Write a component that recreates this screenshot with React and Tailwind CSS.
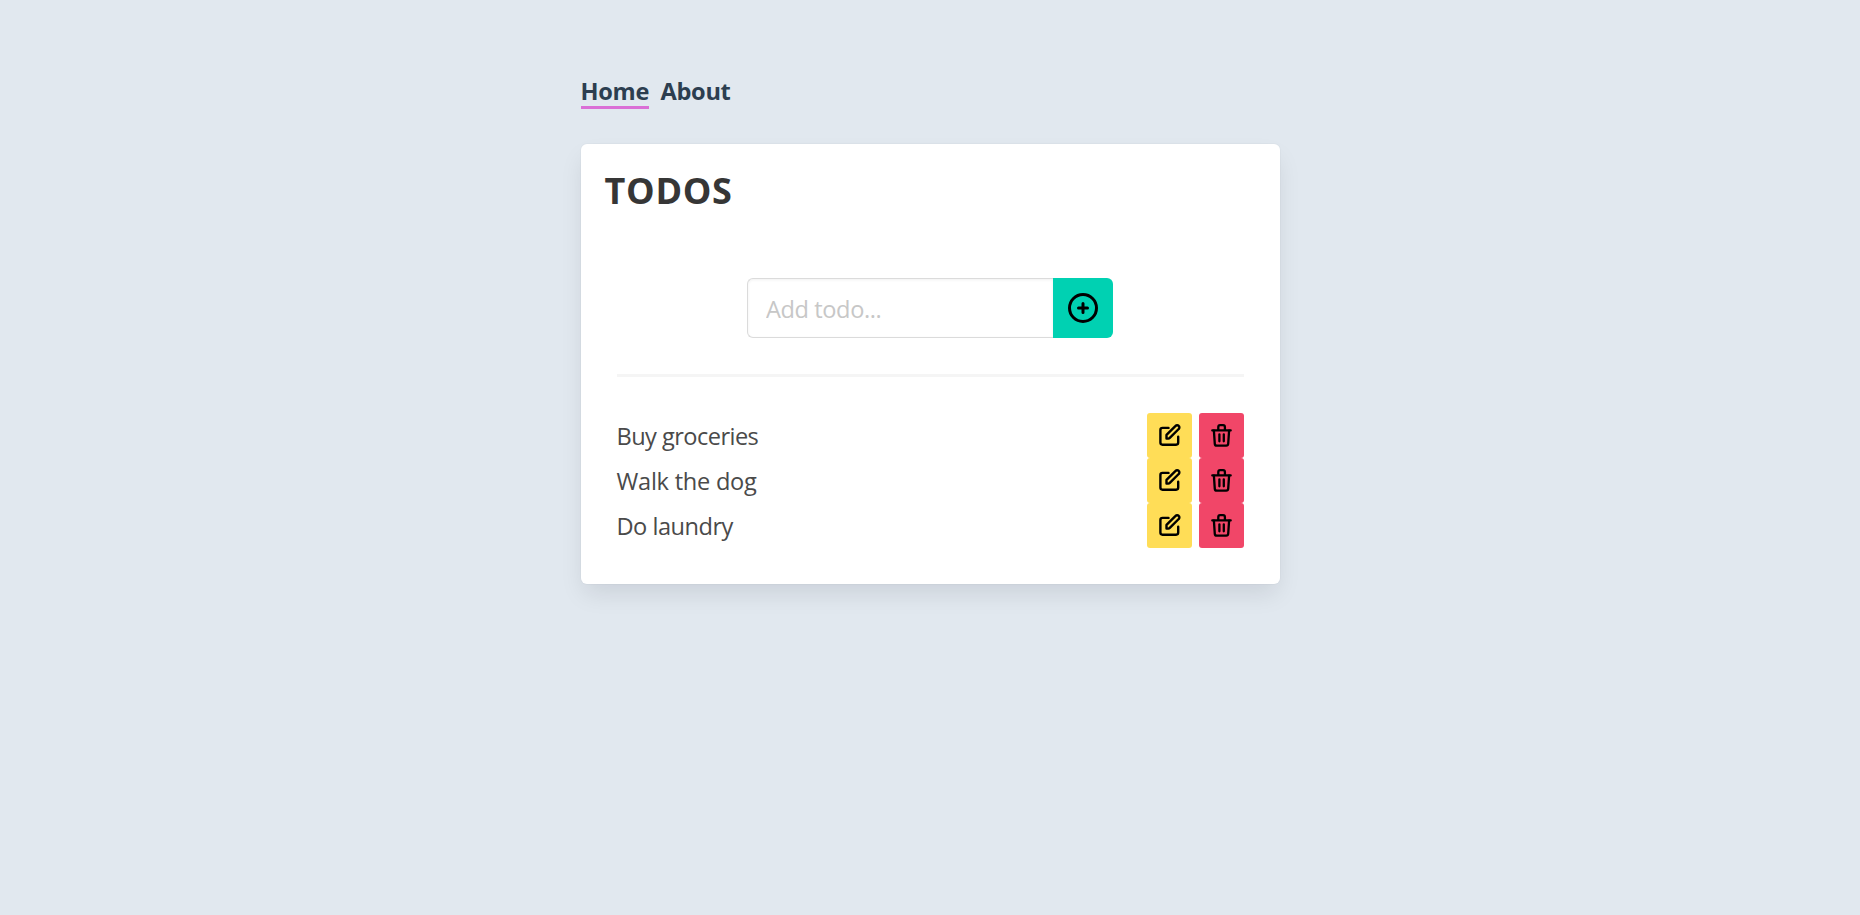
import React from 'react';

const todos = [
  { title: 'Buy groceries', tracking: 'tracking-[-0.55px]' },
  { title: 'Walk the dog', tracking: 'tracking-[-0.25px]' },
  { title: 'Do laundry', tracking: 'tracking-[-0.5px]' },
];

function PlusCircleIcon() {
  return (
    <svg className="h-8 w-8" viewBox="0 0 32 32" fill="none" stroke="black" strokeWidth="3" strokeLinecap="round">
      <circle cx="16" cy="16" r="13.5" />
      <path d="M16 11.5v9M11.5 16h9" />
    </svg>
  );
}

function EditIcon() {
  return (
    <svg className="h-[25px] w-[25px]" viewBox="-0.5 -0.5 25 25" fill="none" stroke="black" strokeWidth="2.4" strokeLinecap="round" strokeLinejoin="round">
      <path d="M11 4.4H5a2.1 2.1 0 0 0-2.1 2.1v12.6a2.1 2.1 0 0 0 2.1 2.1h13.6a2.1 2.1 0 0 0 2.1-2.1v-5.9" />
      <path d="M9 15.1v-3.7l9.1-9a2.1 2.1 0 0 1 3.1 0 2.1 2.1 0 0 1 0 3.1L12.3 14.4a2.3 2.3 0 0 1-1.6.7H9Z" />
    </svg>
  );
}

function TrashIcon() {
  return (
    <svg className="h-[25px] w-[25px]" viewBox="-0.5 -0.5 25 25" fill="none" stroke="black" strokeWidth="2.3" strokeLinecap="round" strokeLinejoin="round">
      <path d="M2.8 6.9h18.4M8.8 6.7V3.4a1.8 1.8 0 0 1 1.8-1.8h3a1.8 1.8 0 0 1 1.8 1.8v3.3" />
      <path d="m4.4 7.1.9 13.2a2 2 0 0 0 2 1.9h9.4a2 2 0 0 0 2-1.9l.9-13.2" />
      <path d="M9.9 10.8v7M14.3 10.8v7" />
    </svg>
  );
}

function TodoItem({ title, tracking }) {
  return (
    <li className="flex h-[45px] items-center justify-between">
      <span className={`text-[23.6px] leading-9 text-[#4a4a4a] ${tracking}`}>{title}</span>
      <div className="flex gap-[7px]">
        <button aria-label="Edit" className="flex h-[45px] w-[45px] items-center justify-center rounded-[3px] bg-[#ffdd57]">
          <EditIcon />
        </button>
        <button aria-label="Delete" className="flex h-[45px] w-[45px] items-center justify-center rounded-[3px] bg-[#f14668]">
          <TrashIcon />
        </button>
      </div>
    </li>
  );
}

export default function App() {
  return (
    <div className="min-h-screen bg-[#e1e8ef] pt-[74px] font-['Open_Sans',sans-serif]">
      <main className="mx-auto flex w-[699px] flex-col">
        <nav className="flex h-[35px] gap-3 text-[23.6px] font-bold leading-[35px] tracking-[-0.3px] text-[#2c3e50]">
          <a className="h-[35px] w-[68px] whitespace-nowrap border-b-[3px] border-[#da70d6]">Home</a>
          <a>About</a>
        </nav>
        <section className="mt-[35px] flex h-[440px] flex-col rounded-[6px] bg-white px-6 pt-6 shadow-[0_12px_24px_-3px_rgba(10,10,30,0.1),0_0_0_1px_rgba(10,10,10,0.02)]">
          <h1 className="h-[46px] text-[36px] font-bold leading-[46px] tracking-[0.7px] text-[#363636]">TODOS</h1>
          <form className="mt-[64px] flex h-[60px] justify-center">
            <input
              placeholder="Add todo..."
              className="h-[60px] w-[306px] rounded-l-[6px] border border-r-0 border-[#dbdbdb] bg-white px-[18px] pt-[2px] text-[23.6px] tracking-[-0.4px] shadow-[inset_0_1px_3px_rgba(10,10,10,0.06)] placeholder:text-[#c7c7c7]"
            />
            <button type="button" aria-label="Add" className="flex h-[60px] w-[60px] items-center justify-center rounded-r-[6px] bg-[#00d1b2]">
              <PlusCircleIcon />
            </button>
          </form>
          <div role="separator" className="mx-3 mt-9 h-[3px] shrink-0 bg-[#f5f5f5]" />
          <ul className="mx-3 mt-9">
            {todos.map((todo) => (
              <TodoItem key={todo.title} {...todo} />
            ))}
          </ul>
        </section>
      </main>
    </div>
  );
}
